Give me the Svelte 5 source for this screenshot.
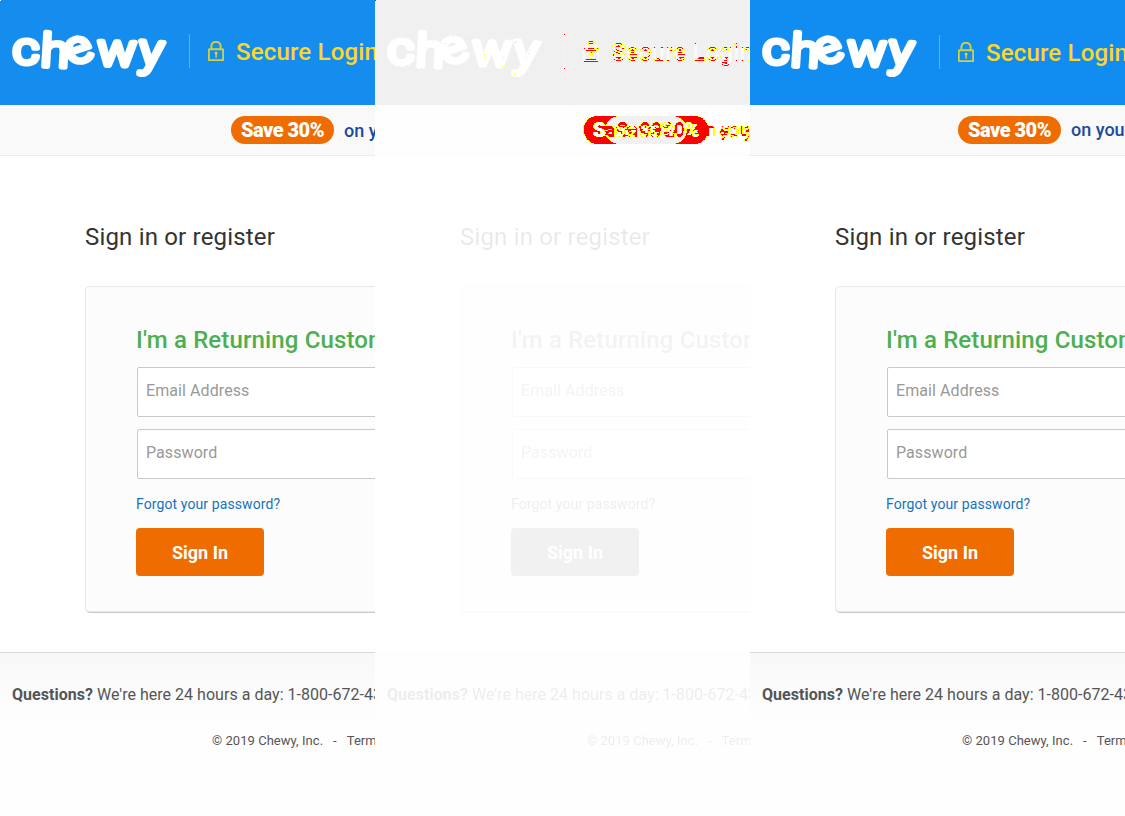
<script>
  const specks = [
    [28, 38], [26, 46], [23, 67], [32, 66], [46, 68], [37, 63], [58, 41], [55, 49],
    [67, 43], [70, 43], [78, 36], [82, 35], [93, 37], [95, 39], [108, 51], [109, 54],
    [110, 57], [107, 67], [127, 66], [128, 57], [140, 41], [140, 42], [154, 50],
    [153, 53], [151, 57], [164, 40], [139, 74], [151, 73]
  ];
</script>

{#snippet banner(kind)}
  <header class="bar {kind}">
    <svg class="logo" viewBox="0 0 160 56" width="160" height="56" role="img" aria-label="chewy">
      <text transform="scale(1.14 1)" x="2.5 26.6 53.2 76.3 112" y="39.3 41 40.6 40 39.5" rotate="0 3 -20 2 5">chewy</text>
    </svg>
    <span class="rule"></span>
    <svg class="lock" viewBox="0 0 16 20" width="16" height="20">
      <rect x=".8" y="8.3" width="14.4" height="11" rx=".8" />
      <path d="M3.4 8V5.3a4.6 4.6 0 0 1 9.2 0V8" />
      <path class="key" d="M6.6 12.3a1.5 1.5 0 1 1 2.2 1.2v3.2H7.4v-3.2z" />
    </svg>
    <span class="secure">Secure Login</span>
  </header>
  <div class="promo {kind}">
    <b>Save 30%</b><span>on your first</span>
  </div>
{/snippet}

{#snippet content()}
  <main>
    <h1>Sign in or register</h1>
    <section class="card">
      <h2>I'm a Returning Customer</h2>
      <div class="field">Email Address</div>
      <div class="field">Password</div>
      <a href="#forgot">Forgot your password?</a>
      <button>Sign In</button>
    </section>
  </main>
  <footer>
    <p class="help"><b>Questions?</b> We're here 24 hours a day: 1-800-672-4399</p>
    <p class="legal">© 2019 Chewy, Inc.<span>-</span>Terms</p>
  </footer>
{/snippet}

<svg class="defs" width="0" height="0">
  <filter id="changes" x="0" y="0" width="100%" height="100%" color-interpolation-filters="sRGB">
    <feColorMatrix values="0 0 0 0 0  0 0 0 0 0  0 0 0 0 0  5 5 5 0 -2" result="mask" />
    <feComponentTransfer result="hard"><feFuncA type="discrete" tableValues="0 1" /></feComponentTransfer>
    <feOffset in="hard" dx="1" dy="0" result="right" />
    <feOffset in="hard" dx="-1" dy="0" result="left" />
    <feComposite in="right" in2="left" operator="in" result="both" />
    <feComposite in="both" in2="hard" operator="in" result="core" />
    <feFlood flood-color="#ff0" /><feComposite in2="hard" operator="in" result="edge" />
    <feFlood flood-color="#f00" /><feComposite in2="core" operator="in" result="fill" />
    <feMerge><feMergeNode in="edge" /><feMergeNode in="fill" /></feMerge>
  </filter>
</svg>

<div class="compare">
  <div class="panel before">{@render banner('a')}{@render content()}<i class="corner"></i></div>
  <div class="panel">
    <div class="faded">{@render banner('a')}{@render content()}</div>
    <div class="changes" aria-hidden="true">
      <div class="layer">{@render banner('a')}</div>
      <div class="layer over">{@render banner('b')}</div>
    </div>
    <svg class="specks" viewBox="0 0 375 105" width="375" height="105" shape-rendering="crispEdges">
      {#each specks as [x, y]}<rect {x} {y} width="1" height="1" fill="#ff0" />{/each}
      <path d="M0 0h1v1H0zM189 34h1v1h-1zM189 68h1v1h-1z" fill="#f00" />
    </svg>
  </div>
  <div class="panel">{@render banner('b')}{@render content()}</div>
</div>

<style>
  :global(body) { margin: 0; background: #fff; overflow: hidden; }
  .defs { position: absolute; }
  .compare { display: grid; grid-template-columns: repeat(3, 375px); width: 1125px; height: 816px; overflow: hidden; font-family: Roboto, sans-serif; }
  .panel { position: relative; width: 375px; height: 816px; overflow: hidden; background: #fff; }
  .faded { filter: grayscale(1); opacity: .1; }
  .changes { position: absolute; left: 0; top: 0; width: 375px; height: 156px; overflow: hidden; isolation: isolate; filter: url(#changes); }
  .layer { position: absolute; inset: 0; overflow: hidden; }
  .over { mix-blend-mode: difference; }
  .specks { position: absolute; left: 0; top: 0; }
  .corner { position: absolute; left: 0; top: 0; width: 1px; height: 1px; background: #fff; }

  .bar { box-sizing: border-box; height: 105px; padding-left: 10px; display: flex; align-items: flex-start; background: #148dee; white-space: nowrap; overflow: hidden; }
  .bar.b { background: #118cf0; }
  .logo { flex: none; margin-top: 25px; }
  .logo text { font: 300 45px Roboto, sans-serif; fill: #fff; stroke: #fff; stroke-width: 5.2; stroke-linejoin: round; stroke-linecap: round; }
  .rule { flex: none; width: 1px; height: 34px; margin: 34px 18px 0 19px; background: #5db1f3; }
  .lock { flex: none; margin: 41px 12px 0 0; fill: none; stroke: #cfcf45; stroke-width: 2; }
  .key { fill: #e4d437; stroke: none; }
  .secure { margin-top: 37px; font-size: 24px; line-height: 30px; font-weight: 500; color: #fdd726; letter-spacing: .17px; }
  .b .rule { margin-top: 35px; }
  .b .lock { margin-top: 42px; }
  .b .secure { margin-top: 38px; }

  .promo { box-sizing: border-box; height: 51px; padding: 11px 0 0 231px; display: flex; gap: 10px; border-bottom: 1px solid #ececec; background: #f9f9f9; white-space: nowrap; overflow: hidden; }
  .promo b { flex: none; width: 103px; height: 28px; border-radius: 14px; background: #ef6c00; color: #fff; font-size: 20px; font-weight: 900; line-height: 28px; text-align: center; letter-spacing: -.5px; }
  .promo span { font-size: 18px; line-height: 28px; font-weight: 500; color: #1c49a0; padding-top: 1px; }
  .promo.b { padding-left: 208px; }
  .promo.b span { padding-top: 0; }

  main { height: 496px; padding-left: 85px; overflow: hidden; }
  h1 { margin: 66px 0 34px; font-size: 24px; line-height: 30px; font-weight: 400; color: #333; letter-spacing: .18px; }
  .card { box-sizing: border-box; width: 600px; height: 327px; padding: 38px 50px 0; display: flex; flex-direction: column; align-items: flex-start; border: 1px solid #e9e9e9; border-bottom: 1px solid #c9c9c9; box-shadow: inset 0 -1px #e9e9e9; border-radius: 5px; background: #fcfcfc; }
  h2 { margin: 0 0 12px; font-size: 24px; line-height: 30px; font-weight: 500; color: #4caf50; white-space: nowrap; letter-spacing: .13px; }
  .field { box-sizing: border-box; width: 480px; height: 50px; margin: 0 0 12px 1px; padding-left: 8px; border: 1px solid #c9c9c9; border-radius: 2px; background: #fff; color: #999; font-size: 16px; line-height: 46px; letter-spacing: .08px; }
  a { margin: 4px 0 15px; font-size: 14px; line-height: 18px; color: #1673bd; text-decoration: none; letter-spacing: .1px; }
  button { width: 128px; height: 48px; padding: 0; border: 0; border-radius: 4px; background: #ef6c00; color: #fff; font: 700 18px/49px Roboto, sans-serif; }
  footer { height: 163px; border-top: 1px solid #dadada; background: linear-gradient(#f8f8f8, #fefefe 73px); color: #555; white-space: nowrap; overflow: hidden; }
  .help { margin: 32px 0 0 12px; font-size: 16px; line-height: 20px; letter-spacing: .025px; }
  .legal { margin: 27px 0 0 212px; font-size: 13px; line-height: 18px; letter-spacing: .04px; }
  .legal span { margin: 0 10px; }
</style>
